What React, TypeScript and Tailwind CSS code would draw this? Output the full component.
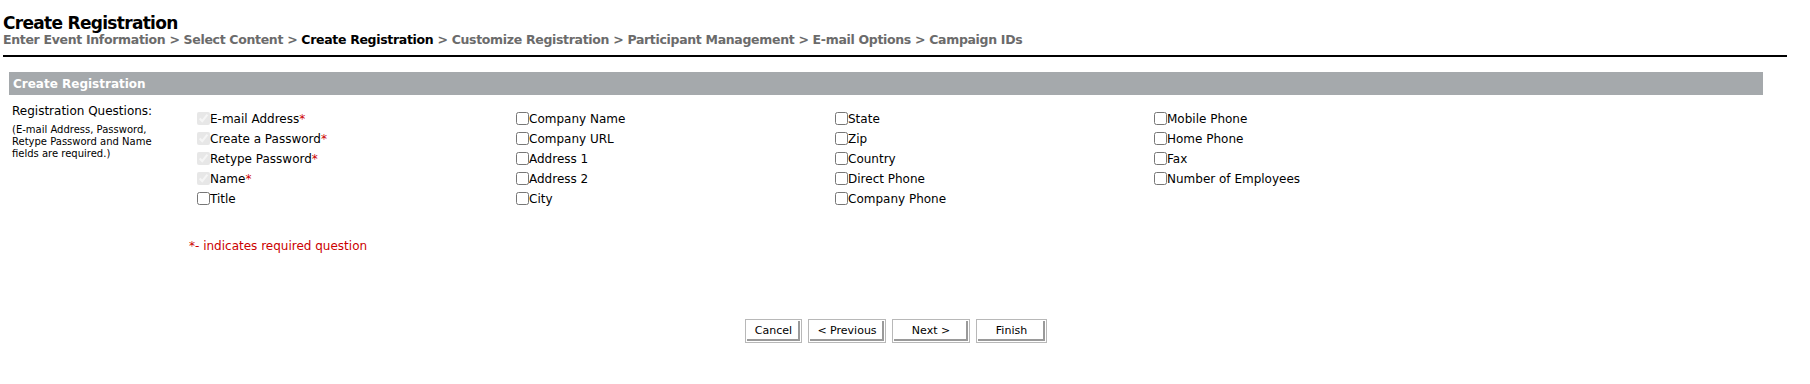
import React from "react";

const font = { fontFamily: '"DejaVu Sans", Verdana, sans-serif' };

const columns: { label: string; required?: boolean }[][] = [
  [
    { label: "E-mail Address", required: true },
    { label: "Create a Password", required: true },
    { label: "Retype Password", required: true },
    { label: "Name", required: true },
    { label: "Title" },
  ],
  [{ label: "Company Name" }, { label: "Company URL" }, { label: "Address 1" }, { label: "Address 2" }, { label: "City" }],
  [{ label: "State" }, { label: "Zip" }, { label: "Country" }, { label: "Direct Phone" }, { label: "Company Phone" }],
  [{ label: "Mobile Phone" }, { label: "Home Phone" }, { label: "Fax" }, { label: "Number of Employees" }],
];

const steps = [
  "Enter Event Information",
  "Select Content",
  "Create Registration",
  "Customize Registration",
  "Participant Management",
  "E-mail Options",
  "Campaign IDs",
];

function Question({ label, required }: { label: string; required?: boolean }) {
  return (
    <label className="flex items-end h-[20px] text-[12px] leading-[14px] text-black">
      {required ? (
        <input type="checkbox" checked disabled readOnly className="m-0 w-[13px] h-[13px] mb-[1px] opacity-50" />
      ) : (
        <input type="checkbox" className="m-0 w-[13px] h-[13px] mb-[1px]" />
      )}
      <span>
        {label}
        {required && <span className="text-[#cc0000]">*</span>}
      </span>
    </label>
  );
}

function Button({ children, width }: { children: React.ReactNode; width: string }) {
  return (
    <button
      className={`${width} h-[24px] bg-white text-[11px] text-black border border-[#b8b8b8] shadow-[inset_0_0_0_1px_#ffffff,inset_-1px_-1px_0_2px_#9a9a9a]`}
    >
      {children}
    </button>
  );
}

export default function App() {
  return (
    <div className="w-[1810px] h-[384px] bg-white" style={font}>
      <div className="pt-[14px] pl-[3px]">
        <h1 className="text-[17px] leading-[18px] font-bold text-black tracking-[-0.7px]">Create Registration</h1>
        <div className="text-[12.5px] leading-[16px] font-bold text-[#6b6b6b] tracking-[-0.32px]">
          {steps.map((s, i) => (
            <span key={s}>
              {i > 0 && " > "}
              <span className={s === "Create Registration" ? "text-black" : ""}>{s}</span>
            </span>
          ))}
        </div>
      </div>
      <div className="ml-[3px] w-[1784px] h-[2px] bg-black mt-[7px]" />

      <div className="ml-[9px] w-[1754px] mt-[15px]">
        <div className="h-[23px] bg-[#a5a9ac] pl-[4px] flex items-center text-[12px] font-bold text-white">
          Create Registration
        </div>
        <div className="flex pt-[9px]">
          <div className="w-[188px] pl-[3px]">
            <div className="text-[12px] leading-[14px] text-black">Registration Questions:</div>
            <div className="text-[10px] leading-[12px] text-black mt-[6px] w-[150px]">
              (E-mail Address, Password, Retype Password and Name fields are required.)
            </div>
          </div>
          <div className="flex pt-[2px]">
            {columns.map((col, i) => (
              <div key={i} className="w-[319px] flex flex-col">
                {col.map((q) => (
                  <Question key={q.label} {...q} />
                ))}
              </div>
            ))}
          </div>
        </div>
        <div className="pl-[180px] mt-[31px] text-[12px] text-[#cc0000]">*- indicates required question</div>
      </div>

      <div className="flex gap-[6px] pl-[745px] mt-[64px]">
        <Button width="w-[57px]">Cancel</Button>
        <Button width="w-[78px]">&lt; Previous</Button>
        <Button width="w-[78px]">Next &gt;</Button>
        <Button width="w-[71px]">Finish</Button>
      </div>
    </div>
  );
}
